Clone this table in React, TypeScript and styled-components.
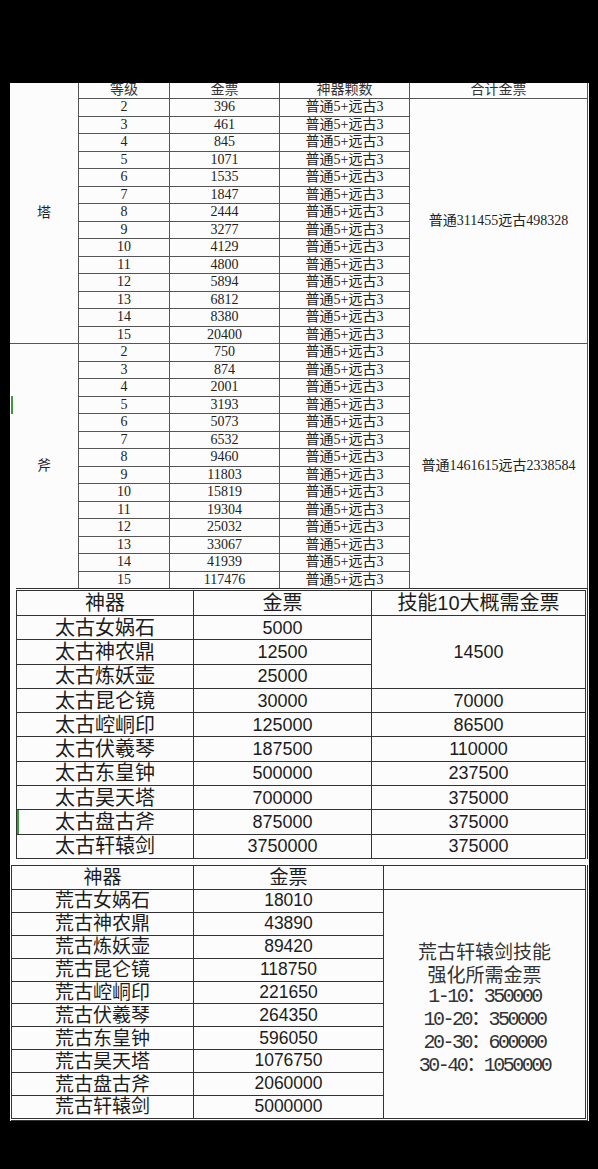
import styled, { createGlobalStyle } from 'styled-components';

const GlobalStyle = createGlobalStyle`
  html, body {
    margin: 0;
    padding: 0;
    background: #000;
  }
  body {
    font-family: "Liberation Sans", "Noto Sans CJK SC", sans-serif;
  }
`;

const Screen = styled.div`
  width: 598px;
  min-height: 1169px;
  padding-top: 83px;
  box-sizing: border-box;
  background: #000;
`;

const Sheet = styled.div`
  margin-left: 10px;
  width: 579px;
  background: #fcfcfc;
  display: flex;
  flex-direction: column;
  align-items: flex-start;
`;

/* ---------- upgrade table (塔 / 斧) ---------- */

const LevelGrid = styled.div`
  display: grid;
  grid-template-columns: 68px 90px 109px 129px 177px;
  grid-template-rows: 15px repeat(28, 16.5px);
  gap: 1px;
  padding-right: 1px;
  width: 578px;
  box-sizing: border-box;
  background: #555;
  color: #222;
  font: 14px "Liberation Serif", "Noto Sans CJK SC", serif;
`;

const LevelCell = styled.div<{ $span?: number; $mark?: boolean }>`
  position: relative;
  grid-row: ${(p) => (p.$span ? `span ${p.$span}` : 'auto')};
  background: #fcfcfc;
  display: flex;
  align-items: center;
  justify-content: center;
  line-height: 1;
  white-space: nowrap;
  overflow: hidden;

  ${(p) =>
    p.$mark &&
    `
    &::before {
      content: '';
      position: absolute;
      left: 1px;
      top: 52px;
      width: 2px;
      height: 18px;
      background: #3b9a3b;
    }
  `}
`;

const HeadCell = styled(LevelCell)`
  align-items: flex-start;
  line-height: 14px;
  color: #333;
`;

/* ---------- price tables (太古 / 荒古) ---------- */

const PriceGrid = styled.div`
  display: grid;
  gap: 1px;
  background: #333;
  background-clip: padding-box;
  border-right: 3px double #333;
  box-sizing: border-box;
  color: #1c1c1c;
  font-family: "Liberation Sans", "Noto Sans CJK SC", sans-serif;
`;

const TaiguGrid = styled(PriceGrid)`
  margin-left: 6px;
  width: 572px;
  grid-template-columns: 176px 177px 213px;
  grid-template-rows: 24px repeat(10, 23.3px);
  border-top: 3px double #333;
  padding: 0 0 1px 1px;
  font-size: 20px;
`;

const HuangguGrid = styled(PriceGrid)`
  margin: 6px 0 0 1px;
  width: 577px;
  grid-template-columns: 181px 189px 201px;
  grid-template-rows: 23px repeat(10, 21.9px);
  border-bottom: 3px double #333;
  padding: 1px 0 0 1px;
  font-size: 19px;
`;

const PriceCell = styled.div<{ $span?: number; $num?: number; $picked?: boolean }>`
  grid-row: ${(p) => (p.$span ? `span ${p.$span}` : 'auto')};
  background: #fcfcfc;
  display: flex;
  align-items: center;
  justify-content: center;
  line-height: 1;
  white-space: nowrap;
  overflow: hidden;
  font-size: ${(p) => (p.$num ? `${p.$num}px` : 'inherit')};
  box-shadow: ${(p) => (p.$picked ? 'inset 2px 0 0 #3b9a3b' : 'none')};
`;

const NoteCell = styled(PriceCell)`
  flex-direction: column;
  padding-top: 8px;
  box-sizing: border-box;
  color: #333;
`;

const NoteLine = styled.div<{ $mono?: boolean }>`
  height: 23px;
  line-height: 23px;
  font-family: ${(p) =>
    p.$mono
      ? '"Liberation Mono", "Noto Sans CJK SC", monospace'
      : '"Noto Sans CJK SC", sans-serif'};
  font-size: ${(p) => (p.$mono ? '20px' : '19px')};
  letter-spacing: ${(p) => (p.$mono ? '-2.5px' : '0')};
`;

const tower: [number, number][] = [
  [2, 396], [3, 461], [4, 845], [5, 1071], [6, 1535], [7, 1847], [8, 2444],
  [9, 3277], [10, 4129], [11, 4800], [12, 5894], [13, 6812], [14, 8380], [15, 20400],
];

const axe: [number, number][] = [
  [2, 750], [3, 874], [4, 2001], [5, 3193], [6, 5073], [7, 6532], [8, 9460],
  [9, 11803], [10, 15819], [11, 19304], [12, 25032], [13, 33067], [14, 41939], [15, 117476],
];

const names = ['女娲石', '神农鼎', '炼妖壶', '昆仑镜', '崆峒印', '伏羲琴', '东皇钟', '昊天塔', '盘古斧', '轩辕剑'];

const taigu = ['5000', '12500', '25000', '30000', '125000', '187500', '500000', '700000', '875000', '3750000'];
const taiguSkill: (string | null)[] = ['14500', null, null, '70000', '86500', '110000', '237500', '375000', '375000', '375000'];

const huanggu = ['18010', '43890', '89420', '118750', '221650', '264350', '596050', '1076750', '2060000', '5000000'];

const LevelRows = ({ label, rows, total, mark }: { label: string; rows: [number, number][]; total: string; mark?: boolean }) => (
  <>
    {rows.map(([lv, cost], i) => (
      <>
        {i === 0 && label === '斧' && (
          <LevelCell $span={14} $mark={mark}>
            {label}
          </LevelCell>
        )}
        <LevelCell key={`l${lv}`}>{lv}</LevelCell>
        <LevelCell key={`c${lv}`}>{cost}</LevelCell>
        <LevelCell key={`n${lv}`}>普通5+远古3</LevelCell>
        {i === 0 && <LevelCell $span={14}>{total}</LevelCell>}
      </>
    ))}
  </>
);

export default function App() {
  return (
    <>
      <GlobalStyle />
      <Screen>
        <Sheet>
          <LevelGrid>
            <LevelCell $span={15}>塔</LevelCell>
            <HeadCell>等级</HeadCell>
            <HeadCell>金票</HeadCell>
            <HeadCell>神器颗数</HeadCell>
            <HeadCell>合计金票</HeadCell>
            <LevelRows label="塔" rows={tower} total="普通311455远古498328" />
            <LevelRows label="斧" rows={axe} total="普通1461615远古2338584" mark />
          </LevelGrid>

          <TaiguGrid>
            <PriceCell>神器</PriceCell>
            <PriceCell>金票</PriceCell>
            <PriceCell>技能10大概需金票</PriceCell>
            {names.map((n, i) => (
              <>
                <PriceCell key={`tn${i}`} $picked={i === 8}>太古{n}</PriceCell>
                <PriceCell key={`tp${i}`} $num={18}>{taigu[i]}</PriceCell>
                {taiguSkill[i] && (
                  <PriceCell key={`ts${i}`} $num={18} $span={i === 0 ? 3 : undefined}>
                    {taiguSkill[i]}
                  </PriceCell>
                )}
              </>
            ))}
          </TaiguGrid>

          <HuangguGrid>
            <PriceCell>神器</PriceCell>
            <PriceCell>金票</PriceCell>
            <PriceCell />
            {names.map((n, i) => (
              <>
                <PriceCell key={`hn${i}`}>荒古{n}</PriceCell>
                <PriceCell key={`hp${i}`} $num={17.5}>{huanggu[i]}</PriceCell>
                {i === 0 && (
                  <NoteCell $span={10}>
                    <NoteLine>荒古轩辕剑技能</NoteLine>
                    <NoteLine>强化所需金票</NoteLine>
                    <NoteLine $mono>1-10：350000</NoteLine>
                    <NoteLine $mono>10-20：350000</NoteLine>
                    <NoteLine $mono>20-30：600000</NoteLine>
                    <NoteLine $mono>30-40：1050000</NoteLine>
                  </NoteCell>
                )}
              </>
            ))}
          </HuangguGrid>
        </Sheet>
      </Screen>
    </>
  );
}
